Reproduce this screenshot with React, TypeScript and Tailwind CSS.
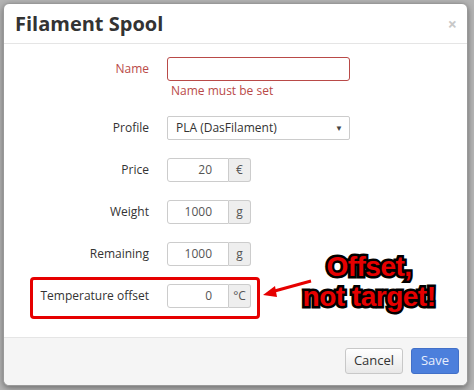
import React from "react";

const font = "font-['Open_Sans','Noto_Sans',sans-serif]";

function Label({ children, red }: { children: React.ReactNode; red?: boolean }) {
  return (
    <div className={`w-[145px] shrink-0 text-right text-[12px] ${red ? "text-[#b94a48]" : "text-[#333]"}`}>
      {children}
    </div>
  );
}

function Group({ value, unit }: { value: string; unit: string }) {
  return (
    <div className="ml-[18px] flex h-[24px] w-[84px]">
      <div className="flex h-full w-[62px] items-center justify-end rounded-l-[3px] border border-[#ccc] bg-white pr-[16px] text-[12px] text-[#555]">
        {value}
      </div>
      <div className="flex h-full w-[22px] items-center justify-center rounded-r-[3px] border border-l-0 border-[#ccc] bg-[#eee] text-[12px] text-[#555]">
        {unit}
      </div>
    </div>
  );
}

export default function App() {
  return (
    <div className={`h-[390px] w-[474px] overflow-hidden bg-[#b4b4b4] pl-[3px] pt-[3px] ${font}`}>
      <div className="relative flex h-[383px] w-[465px] flex-col rounded-[6px] border border-[#999] bg-white shadow-[0_2px_6px_rgba(0,0,0,0.4)]">
        {/* header */}
        <div className="flex h-[40px] shrink-0 items-center justify-between border-b border-[#e5e5e5] pl-[11px] pr-[10px]">
          <div className="text-[20px] font-bold leading-none text-[#333]">Filament Spool</div>
          <div className="text-[16px] font-bold leading-none text-[#c8c8c8]">×</div>
        </div>
        {/* body */}
        <div className="flex flex-1 flex-col pt-[13px]">
          <div className="flex items-center">
            <Label red>Name</Label>
            <div className="ml-[18px] h-[24px] w-[183px] rounded-[3px] border border-[#b94a48] bg-white" />
          </div>
          <div className="ml-[167px] mt-[1px] h-[17px] text-[12px] leading-[17px] text-[#b94a48]">Name must be set</div>
          <div className="mt-[17px] flex items-center">
            <Label>Profile</Label>
            <div className="ml-[18px] flex h-[24px] w-[183px] items-center justify-between rounded-[2px] border border-[#ccc] bg-white pl-[8px] pr-[6px] text-[12px] text-[#333]">
              <span>PLA (DasFilament)</span>
              <span className="text-[8px] text-[#444]">▼</span>
            </div>
          </div>
          <div className="mt-[18px] flex items-center">
            <Label>Price</Label>
            <Group value="20" unit="€" />
          </div>
          <div className="mt-[18px] flex items-center">
            <Label>Weight</Label>
            <Group value="1000" unit="g" />
          </div>
          <div className="mt-[18px] flex items-center">
            <Label>Remaining</Label>
            <Group value="1000" unit="g" />
          </div>
          <div className="mt-[18px] flex items-center">
            <Label>Temperature offset</Label>
            <Group value="0" unit="°C" />
          </div>
        </div>
        {/* footer */}
        <div className="flex h-[48px] shrink-0 items-start justify-end gap-[8px] rounded-b-[6px] border-t border-[#e5e5e5] bg-[#f5f5f5] pr-[8px] pt-[10px]">
          <button className="flex h-[26px] w-[58px] items-center justify-center rounded-[3px] border border-[#c8c8c8] bg-gradient-to-b from-white to-[#e8e8e8] text-[13px] text-[#333]">
            Cancel
          </button>
          <button className="flex h-[26px] w-[48px] items-center justify-center rounded-[3px] border border-[#4270c8] bg-[#4c7fdc] text-[13px] text-[#e8eefc]">
            Save
          </button>
        </div>

        {/* annotation box */}
        <div className="absolute left-[26px] top-[273px] h-[42px] w-[230px] rounded-[4px] border-[3px] border-[#e60000]" />
        {/* arrow */}
        <svg className="absolute left-[255px] top-[272px]" width="60" height="26" viewBox="0 0 60 26">
          <line x1="52" y1="5" x2="12" y2="16" stroke="#e60000" strokeWidth="3" />
          <polygon points="4,19 16,10 18,21" fill="#e60000" />
        </svg>
        {/* annotation text */}
        <div className="absolute left-[286px] top-[248px] w-[158px] text-center font-['Liberation_Sans',Arial,sans-serif] text-[28px] font-bold leading-[30px] tracking-[-0.5px] text-[#e60000] [-webkit-text-stroke:5px_#000] [paint-order:stroke_fill] [text-shadow:1px_1px_2px_rgba(0,0,0,0.5)]">
          Offset,
          <br />
          not target!
        </div>
      </div>
    </div>
  );
}
